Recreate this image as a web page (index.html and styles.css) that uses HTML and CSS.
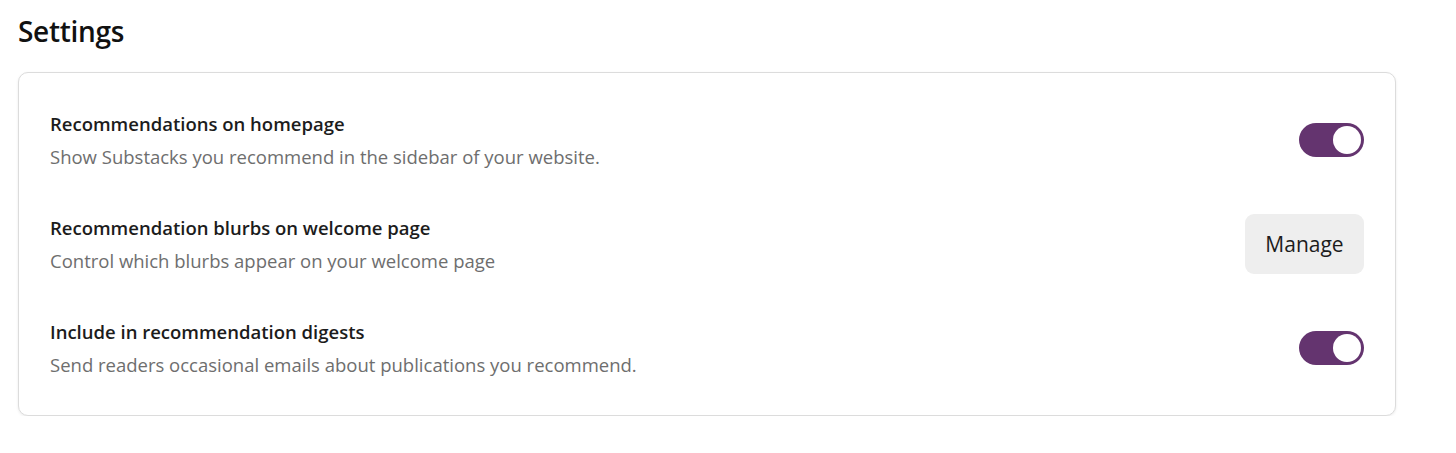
FILE: index.html
```html
<!DOCTYPE html>
<html lang="en">

<head>
    <meta charset="UTF-8">
    <meta name="viewport" content="width=device-width, initial-scale=1.0">
    <title>Settings</title>
    <link rel="stylesheet" href="styles.css">
</head>

<body>

    <div class="page">
        <h1>Settings</h1>

        <div class="card">
            <div class="setting-row">
                <div class="setting-text">
                    <div class="setting-title">Recommendations on homepage</div>
                    <div class="setting-desc">Show Substacks you recommend in the sidebar of your website.</div>
                </div>
                <label class="toggle">
                    <input type="checkbox" checked>
                    <span class="slider"></span>
                </label>
            </div>

            <div class="setting-row">
                <div class="setting-text">
                    <div class="setting-title">Recommendation blurbs on welcome page</div>
                    <div class="setting-desc">Control which blurbs appear on your welcome page</div>
                </div>
                <button class="manage-btn">Manage</button>
            </div>

            <div class="setting-row">
                <div class="setting-text">
                    <div class="setting-title">Include in recommendation digests</div>
                    <div class="setting-desc">Send readers occasional emails about publications you recommend.</div>
                </div>
                <label class="toggle">
                    <input type="checkbox" checked>
                    <span class="slider"></span>
                </label>
            </div>
        </div>
    </div>

</body>

</html>
```

FILE: styles.css
```css
* {
    box-sizing: border-box;
    margin: 0;
    padding: 0;
}

body {
    background-color: #ffffff;
    font-family: "Open Sans", Arial, sans-serif;
    color: #1c1c1c;
}

.page {
    padding: 12px 60px 0 18px;
}

h1 {
    font-size: 28px;
    font-weight: 600;
    line-height: 38px;
    color: #111;
    margin-bottom: 22px;
    letter-spacing: -0.3px;
}

.card {
    border: 1px solid #dcdcdc;
    border-radius: 10px;
    box-shadow: 0px 1px 3px rgba(0, 0, 0, 0.08);
    padding: 15px 31px 15px 31px;
    background: white;
}

.setting-row {
    display: flex;
    align-items: center;
    justify-content: space-between;
    height: 104px;
}

.setting-title {
    font-size: 18.5px;
    font-weight: 600;
    line-height: 25px;
    color: #1c1c1c;
    margin-bottom: 8px;
}

.setting-desc {
    font-size: 18.5px;
    line-height: 25px;
    color: #6e6e6e;
}

.toggle {
    position: relative;
    display: inline-block;
    width: 65px;
    height: 34px;
}

.toggle input {
    display: none;
}

.slider {
    position: absolute;
    inset: 0;
    background-color: #64346f;
    border-radius: 17px;
    cursor: pointer;
}

.slider::after {
    content: "";
    position: absolute;
    top: 3px;
    right: 3px;
    width: 28px;
    height: 28px;
    border-radius: 50%;
    background: white;
}

.manage-btn {
    background-color: #eeeeee;
    border: none;
    border-radius: 9px;
    width: 119px;
    height: 60px;
    font-family: "Open Sans", Arial, sans-serif;
    font-size: 21px;
    font-weight: 500;
    color: #1c1c1c;
    cursor: pointer;
}
```
